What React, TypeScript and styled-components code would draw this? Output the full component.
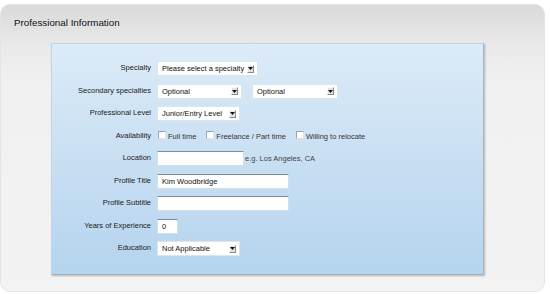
import React from 'react'
import styled, { createGlobalStyle } from 'styled-components'

const GlobalStyle = createGlobalStyle`
  body {
    margin: 0;
    background: #ffffff;
    font-family: "Liberation Sans", Arial, sans-serif;
  }
`

function Select({ value, width }: { value: string; width: number }) {
  return (
    <SelectBox style={{ width }}>
      <span>{value}</span>
      <Arrow>
        <svg width="5" height="3" viewBox="0 0 5 3">
          <path d="M0 0h5L2.5 3z" fill="#111" />
        </svg>
      </Arrow>
    </SelectBox>
  )
}

function Check({ label }: { label: string }) {
  return (
    <CheckItem>
      <Box />
      {label}
    </CheckItem>
  )
}

function App() {
  return (
    <>
      <GlobalStyle />
      <Panel>
        <Title>Professional Information</Title>
        <Card>
          <Row>
            <Label>Specialty</Label>
            <Select value="Please select a specialty" width={101} />
          </Row>
          <Row>
            <Label>Secondary specialties</Label>
            <Select value="Optional" width={85} />
            <Spacer />
            <Select value="Optional" width={86} />
          </Row>
          <Row>
            <Label>Professional Level</Label>
            <Select value="Junior/Entry Level" width={83} />
          </Row>
          <Row>
            <Label>Availability</Label>
            <Check label="Full time" />
            <Check label="Freelance / Part time" />
            <Check label="Willing to relocate" />
          </Row>
          <Row>
            <Label>Location</Label>
            <Input width={87} />
            <Hint>e.g. Los Angeles, CA</Hint>
          </Row>
          <Row>
            <Label>Profile Title</Label>
            <Input width={132}>Kim Woodbridge</Input>
          </Row>
          <Row>
            <Label>Profile Subtitle</Label>
            <Input width={132} />
          </Row>
          <Row>
            <Label>Years of Experience</Label>
            <Input width={21}>0</Input>
          </Row>
          <Row>
            <Label>Education</Label>
            <Select value="Not Applicable" width={83} />
          </Row>
        </Card>
      </Panel>
    </>
  )
}

export default App

const Panel = styled.div`
  margin: 4px 5px 0 0;
  height: 288px;
  box-sizing: border-box;
  border: 1px solid #e4e4e4;
  border-radius: 10px;
  background: linear-gradient(#dadada 0, #e9e9e9 40px, #f1f1f1 80px, #f3f3f3 100%);
  padding-top: 12px;
`
const Title = styled.div`
  font-size: 9.8px;
  line-height: 12px;
  color: #111;
  padding-left: 13px;
`
const Card = styled.div`
  margin: 14px 0 0 50px;
  width: 433px;
  height: 232px;
  box-sizing: border-box;
  border: 1px solid #c3d6e6;
  border-right-color: #a9b4be;
  border-bottom-color: #a2aeb9;
  box-shadow: 1px 1px 2px rgba(0, 0, 0, 0.25);
  background: linear-gradient(#dcebf8, #b5d4ee);
  padding-top: 17px;
  display: flex;
  flex-direction: column;
  gap: 7.5px;
`
const Row = styled.div`
  display: flex;
  align-items: center;
  height: 15px;
  font-size: 7.5px;
  color: #1a1a1a;
`
const Label = styled.div`
  width: 99px;
  text-align: right;
  margin-right: 6px;
  margin-top: -2px;
  white-space: nowrap;
`
const SelectBox = styled.div`
  height: 15px;
  box-sizing: border-box;
  background: #fff;
  border: 1px solid #dde4ea;
  display: flex;
  align-items: center;
  justify-content: space-between;
  padding: 0 3px 0 4px;
  color: #111;
  white-space: nowrap;
`
const Arrow = styled.div`
  width: 7px;
  height: 8px;
  box-sizing: border-box;
  background: #e4e4e4;
  border: 1px solid;
  border-color: #fafafa #8a8a8a #8a8a8a #fafafa;
  display: flex;
  align-items: center;
  justify-content: center;
  flex-shrink: 0;
`
const Spacer = styled.div`
  width: 10px;
`
const CheckItem = styled.div`
  display: flex;
  align-items: center;
  margin-right: 9px;
  color: #333;
`
const Box = styled.div`
  width: 8px;
  height: 8px;
  box-sizing: border-box;
  margin: -2px 2px 0 1px;
  background: #fff;
  border: 1px solid;
  border-color: #9aa4ad #dde4ea #dde4ea #9aa4ad;
`
const Input = styled.div<{ width: number }>`
  width: ${p => p.width}px;
  height: 15px;
  box-sizing: border-box;
  background: #fff;
  border: 1px solid #d3dee8;
  border-top-color: #7d8d9c;
  padding: 0 4px;
  line-height: 13px;
  color: #111;
`
const Hint = styled.span`
  color: #444;
  margin-left: 1px;
`
